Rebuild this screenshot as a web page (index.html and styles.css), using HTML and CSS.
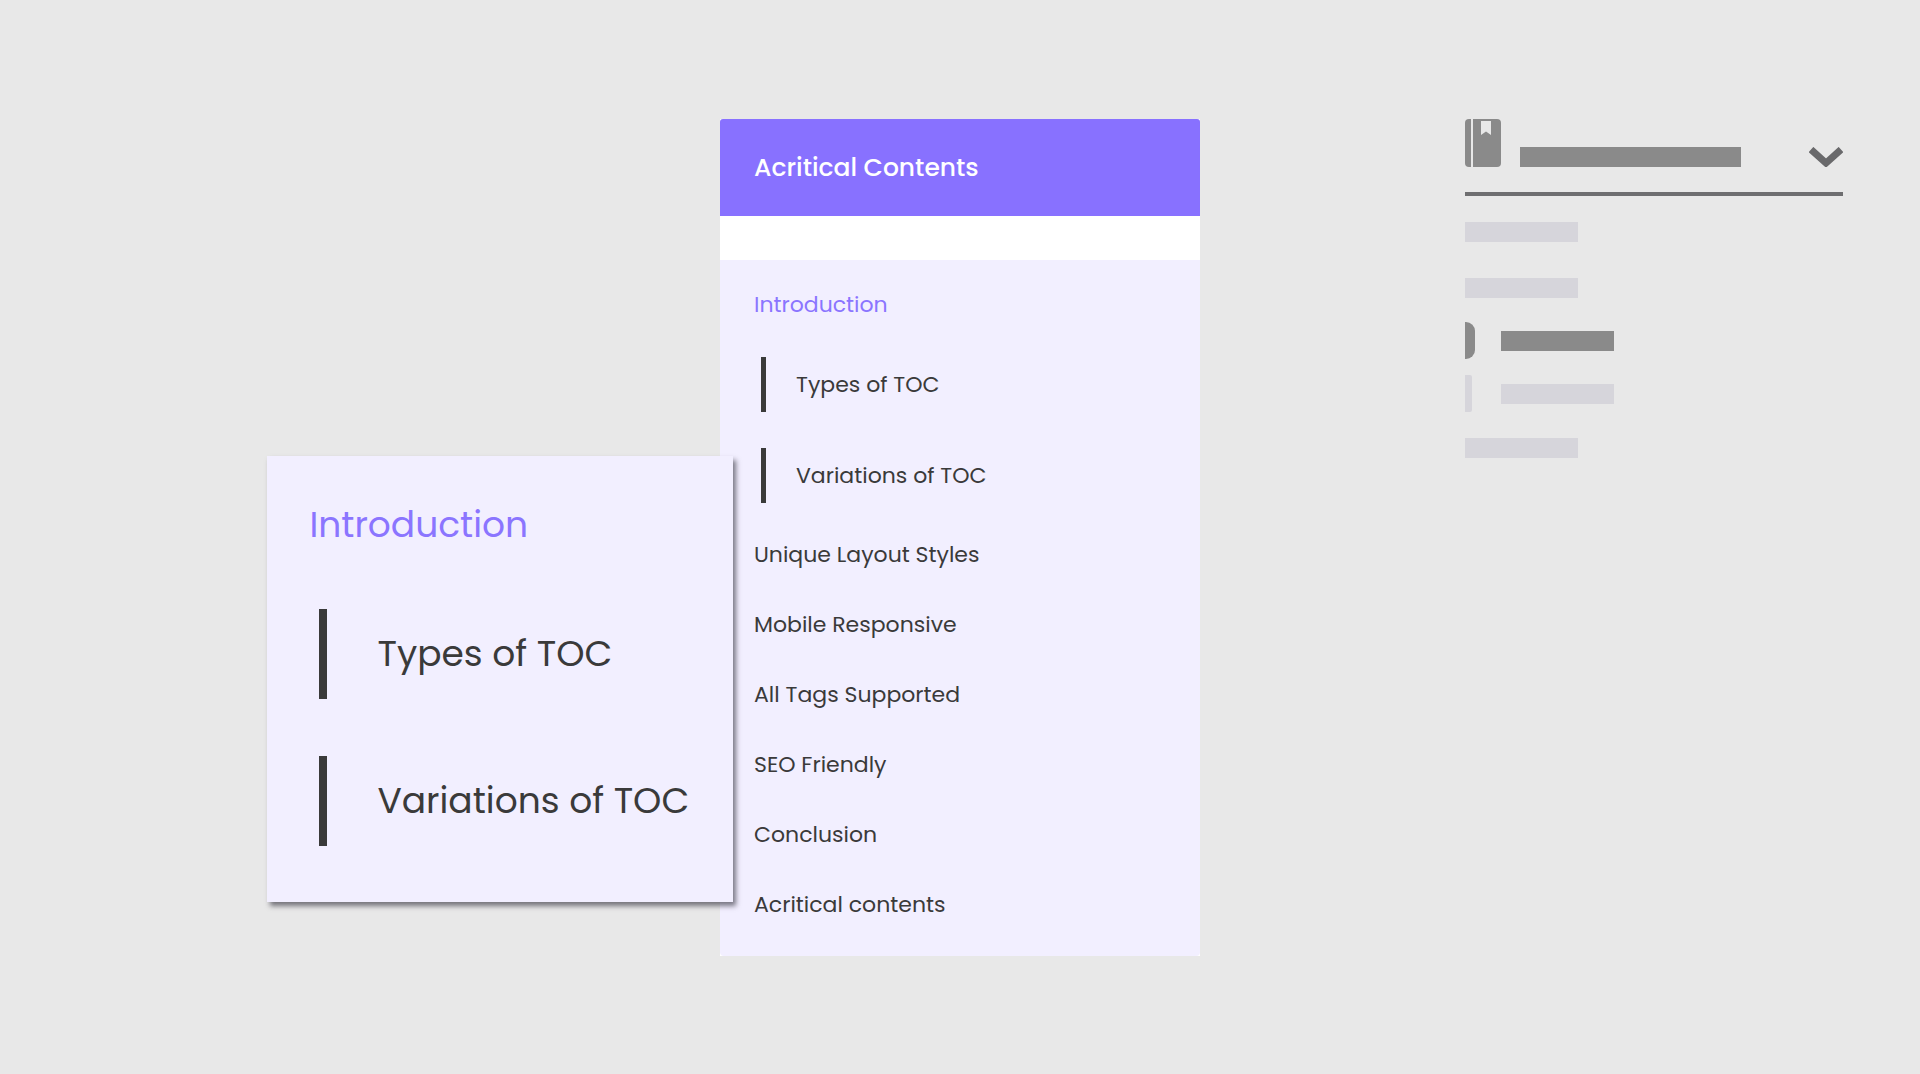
FILE: index.html
```html
<!DOCTYPE html>
<html lang="en">
<head>
<meta charset="UTF-8" />
<meta name="viewport" content="width=device-width, initial-scale=1" />
<title>Acritical Contents</title>
<link rel="stylesheet" href="styles.css">
</head>
<body>
<main class="page">
  <nav class="toc" aria-label="Table of contents">
    <h2 class="toc-title">Acritical Contents</h2>
    <ul class="toc-list">
      <li><a class="active" href="#introduction">Introduction</a>
        <ul class="toc-sub">
          <li><a href="#types">Types of TOC</a></li>
          <li><a href="#variations">Variations of TOC</a></li>
        </ul>
      </li>
      <li><a href="#layout">Unique Layout Styles</a></li>
      <li><a href="#mobile">Mobile Responsive</a></li>
      <li><a href="#tags">All Tags Supported</a></li>
      <li><a href="#seo">SEO Friendly</a></li>
      <li><a href="#conclusion">Conclusion</a></li>
      <li><a href="#contents">Acritical contents</a></li>
    </ul>

    <!-- enlarged part of the list -->
    <div class="preview">
      <a class="active" href="#introduction">Introduction</a>
      <ul class="preview-sub">
        <li><a href="#types">Types of TOC</a></li>
        <li><a href="#variations">Variations of TOC</a></li>
      </ul>
    </div>
  </nav>

  <aside class="skeleton" aria-label="Layout sketch">
    <div class="skeleton-head">
      <svg class="book" viewBox="0 0 36 48" aria-hidden="true">
        <path d="M4 0H6V48H4Q0 48 0 44V4Q0 0 4 0Z"/>
        <path d="M8 0H32Q36 0 36 4V44Q36 48 32 48H8Z"/>
        <path class="ribbon" d="M16 2H26V16L21 12.5L16 16Z"/>
      </svg>
      <div class="bar bar-title"></div>
      <button class="toggle" type="button" aria-label="Toggle list">
        <svg viewBox="0 0 34 20" aria-hidden="true">
          <path d="M2 2.5L17 16L32 2.5"/>
        </svg>
      </button>
    </div>
    <div class="skeleton-body">
      <div class="bar"></div>
      <div class="bar"></div>
      <div class="skeleton-sub">
        <div class="row current"><span class="marker"></span><div class="bar"></div></div>
        <div class="row"><span class="marker"></span><div class="bar"></div></div>
      </div>
      <div class="bar"></div>
    </div>
  </aside>
</main>
</body>
</html>
```
FILE: styles.css
```css
* {
  box-sizing: border-box;
}
body {
  margin: 0;
  background: #e8e8e8;
  font-family: Poppins, Inter, sans-serif;
  color: #3a3a3a;
}
ul {
  list-style: none;
  margin: 0;
  padding: 0;
}
a {
  display: block;
  color: inherit;
  text-decoration: none;
  white-space: nowrap;
}
a.active {
  color: #8b75ff;
}
.page {
  display: grid;
  grid-template-columns: 3fr 2fr 3fr;
  align-items: start;
  padding: 119px 0;
}

/* contents card */
.toc {
  grid-column: 2;
  position: relative;
  background: #fff;
}
.toc-title {
  margin: 0 0 44px;
  padding: 0 34px;
  background: #8871ff;
  color: #fff;
  font-size: 25px;
  font-weight: 500;
  line-height: 97px;
  border-radius: 3px 3px 0 0;
}
.toc-list {
  padding: 10px 34px 16px;
  background: #f2efff;
  border-radius: 0 0 4px 4px;
  font-size: 22px;
  line-height: 70px;
}
.toc-sub {
  display: grid;
  gap: 36px;
  padding: 17px 0 17px 7px;
  line-height: 55px;
}
.toc-sub li {
  border-left: 5px solid #3a3a3a;
  padding-left: 30px;
}

/* enlarged preview */
.preview {
  position: absolute;
  top: 337px;
  right: calc(100% - 13px);
  width: 97%;
  padding: 12px 42px 29px;
  background: #f2efff;
  box-shadow: 3px 4px 5px rgba(40, 38, 50, 0.6);
  font-size: 36px;
  line-height: 114px;
}
.preview-sub {
  display: grid;
  gap: 57px;
  padding: 27px 0 27px 10px;
  line-height: 90px;
}
.preview-sub li {
  border-left: 8px solid #3a3a3a;
  padding-left: 50px;
}

/* sketch of the collapsed layout */
.skeleton {
  justify-self: end;
  width: 378px;
  margin-right: 77px;
}
.skeleton-head {
  display: flex;
  align-items: flex-end;
  padding-bottom: 25px;
  border-bottom: 4px solid #6e6e70;
}
.book {
  width: 36px;
  height: 48px;
  margin-right: 19px;
  fill: #8a8a8a;
}
.book .ribbon {
  fill: #e8e8e8;
}
.bar {
  width: 113px;
  height: 20px;
  background: #d6d5db;
}
.bar-title {
  width: 221px;
  background: #8a8a8a;
}
.toggle {
  display: flex;
  margin-left: auto;
  padding: 0;
  border: 0;
  background: none;
  cursor: pointer;
}
.toggle svg {
  width: 34px;
  height: 20px;
  fill: none;
  stroke: #69696b;
  stroke-width: 7;
}
.skeleton-body {
  display: grid;
  gap: 36px;
  padding-top: 26px;
}
.skeleton-sub {
  display: grid;
  gap: 16px;
  margin: -12px 0 -10px;
}
.row {
  display: flex;
  align-items: center;
}
.marker {
  width: 7px;
  height: 37px;
  margin-right: 29px;
  border-radius: 0 2px 2px 0;
  background: #d6d5db;
}
.current .marker {
  width: 10px;
  margin-right: 26px;
  border-radius: 0 9px 9px 0;
}
.current .marker,
.current .bar {
  background: #8a8a8a;
}
```
